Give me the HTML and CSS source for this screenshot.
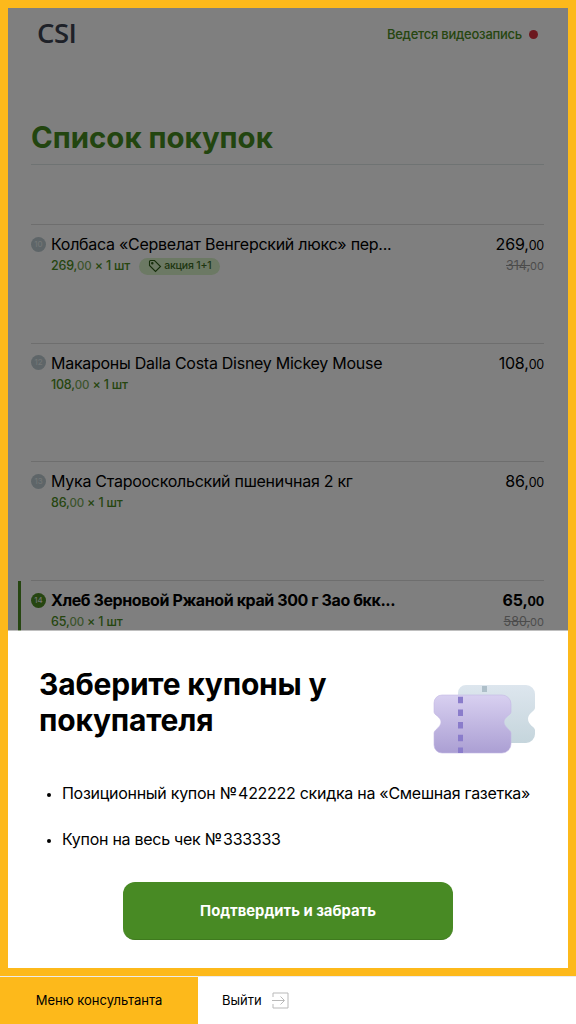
FILE: index.html
```html
<!DOCTYPE html>
<html lang="en">
<head>
  <meta charset="UTF-8">
  <title>Список покупок</title>
  <link rel="stylesheet" href="styles.css">
</head>
<body>
  <div class="frame">
    <div class="receipt">
      <div class="top-bar">
        <div class="logo">CSI</div>
        <div class="rec">Ведется видеозапись <span class="rec-dot"></span></div>
      </div>
      <h1 class="title">Список покупок</h1>
      <div class="items">
        <div class="item">
          <div class="item-main">
            <div class="item-name"><span class="num">10</span><span class="name">Колбаса «Сервелат Венгерский люкс» пер...</span></div>
            <div class="item-sub">
              <span>269,<small>00</small> × 1 шт</span>
              <span class="promo">
                <svg width="14" height="14" viewBox="0 0 14 14" fill="none" stroke="#2a5a14" stroke-width="1.100"><path d="M1.500 2.500v4l6 6 5-5-6-6h-4a1 1 0 0 0-1 1z"/><circle cx="4.300" cy="4.300" r=".7"/></svg>
                акция 1+1
              </span>
            </div>
          </div>
          <div class="item-price">
            <div class="price">269,<small>00</small></div>
            <div class="old-price"><s>314,</s><small>00</small></div>
          </div>
        </div>
        <div class="item">
          <div class="item-main">
            <div class="item-name"><span class="num">12</span><span class="name">Макароны Dalla Costa Disney Mickey Mouse</span></div>
            <div class="item-sub"><span>108,<small>00</small> × 1 шт</span></div>
          </div>
          <div class="item-price">
            <div class="price">108,<small>00</small></div>
          </div>
        </div>
        <div class="item">
          <div class="item-main">
            <div class="item-name"><span class="num">13</span><span class="name">Мука Старооскольский пшеничная 2 кг</span></div>
            <div class="item-sub"><span>86,<small>00</small> × 1 шт</span></div>
          </div>
          <div class="item-price">
            <div class="price">86,<small>00</small></div>
          </div>
        </div>
        <div class="item current">
          <div class="item-main">
            <div class="item-name"><span class="num">14</span><span class="name">Хлеб Зерновой Ржаной край 300 г Зао бкк...</span></div>
            <div class="item-sub"><span>65,<small>00</small> × 1 шт</span></div>
          </div>
          <div class="item-price">
            <div class="price">65,<small>00</small></div>
            <div class="old-price"><s>580,</s><small>00</small></div>
          </div>
        </div>
      </div>
      <div class="dim"></div>
    </div>
    <div class="sheet">
      <div class="sheet-head">
        <h2 class="sheet-title">Заберите купоны у покупателя</h2>
        <svg class="coupons" width="104" height="76" viewBox="0 0 104 76">
          <defs>
            <linearGradient id="back" x1="0" y1="0" x2="0" y2="1"><stop offset="0" stop-color="#dde6ee"/><stop offset="1" stop-color="#c5d5dc"/></linearGradient>
            <linearGradient id="front" x1="0" y1="0" x2="0" y2="1"><stop offset="0" stop-color="#d8d0f0"/><stop offset="1" stop-color="#ab9fd3"/></linearGradient>
          </defs>
          <path fill="url(#back)" d="M33 3h60a9 9 0 0 1 9 9v14c0 3-7 5-7 11s7 8 7 11v4a9 9 0 0 1-9 9H33a8 8 0 0 1-8-8V11a8 8 0 0 1 8-8z"/>
          <rect x="49" y="4" width="5" height="6" fill="#aebfc9"/>
          <path fill="url(#front)" stroke="#c4b9e4" stroke-width=".6" d="M9 13h60a9 9 0 0 1 9 9v8c0 3-7 5-7 10s7 8 7 11v11a9 9 0 0 1-9 9H9a8 8 0 0 1-8-8V51c0-3 7-6 7-11s-7-7-7-10V21a8 8 0 0 1 8-8z"/>
          <path stroke="#8a7ccb" stroke-width="5" stroke-dasharray="6.500 6.200" d="M27.500 14.700V71"/>
        </svg>
      </div>
      <ul class="coupon-list">
        <li>Позиционный купон №&#8202;422222 скидка на «Смешная газетка»</li>
        <li>Купон на весь чек №&#8202;333333</li>
      </ul>
      <button class="confirm">Подтвердить и забрать</button>
    </div>
  </div>
  <div class="footer">
    <div class="footer-menu">Меню консультанта</div>
    <div class="footer-exit">Выйти
      <svg width="17" height="17" viewBox="0 0 17 17" fill="none" stroke="#b9b9b9" stroke-width="1"><path d="M1 5V1h15v15H1v-4"/><path d="M0 8.500h12M8.500 4.500l4 4-4 4"/></svg>
    </div>
  </div>
</body>
</html>
```

FILE: styles.css
```css
* {
  box-sizing: border-box;
}

body {
  margin: 0;
  width: 576px;
  height: 1024px;
  overflow: hidden;
  font-family: Inter, "Liberation Sans", sans-serif;
  color: #000;
  background: #fff;
}

.frame {
  height: 976px;
  border: 8px solid #fdb91b;
  display: flex;
  flex-direction: column;
}

.receipt {
  position: relative;
  flex: none;
  height: 623px;
  overflow: hidden;
  background: #fff;
  padding: 0 24px 0 23px;
}

.dim {
  position: absolute;
  top: 0;
  left: 0;
  right: 0;
  bottom: 0;
  background: rgba(0, 0, 0, 0.5);
  border-bottom: 1px solid rgba(255, 255, 255, 0.5);
}

.top-bar {
  display: flex;
  justify-content: space-between;
  align-items: center;
  height: 52px;
  padding: 0 6px 0 6px;
}

.logo {
  font-family: "Open Sans", sans-serif;
  font-size: 27.500px;
  font-weight: 600;
  letter-spacing: -0.5px;
  line-height: 48px;
  height: 50px;
  color: #3c4250;
}

.rec {
  font-size: 13px;
  font-weight: 500;
  letter-spacing: -0.25px;
  color: #4c8c22;
  display: flex;
  align-items: center;
  gap: 7px;
}

.rec-dot {
  width: 9px;
  height: 9px;
  border-radius: 50%;
  background: #d9313f;
}

.title {
  margin: 52px 0 0;
  height: 53px;
  font-size: 29.400px;
  font-weight: 700;
  line-height: 52px;
  color: #458a1f;
  border-bottom: 1px solid #dfe6e6;
}

.items {
  margin-top: 59px;
}

.item {
  position: relative;
  display: flex;
  justify-content: space-between;
  height: 118.700px;
  padding-top: 8px;
  border-top: 1px solid #ddd;
}

.item-name {
  display: flex;
  align-items: center;
  gap: 5px;
  font-size: 16px;
  line-height: 22px;
  letter-spacing: -0.27px;
}

.num {
  width: 15px;
  height: 15px;
  border-radius: 50%;
  background: #bccbd0;
  color: #e8eeee;
  font-size: 8px;
  line-height: 15px;
  letter-spacing: 0;
  text-align: center;
}

.item-sub {
  margin: 2px 0 0 20px;
  font-size: 12.500px;
  font-weight: 500;
  line-height: 18px;
  letter-spacing: -0.2px;
  color: #4c8c22;
  display: flex;
  align-items: center;
  gap: 9px;
}

.item-sub small {
  font-size: 11.500px;
  opacity: 0.75;
}

.promo {
  display: flex;
  align-items: center;
  gap: 2px;
  height: 17px;
  padding: 0 9px;
  border-radius: 9px;
  background: #d8f2c8;
  font-size: 10.500px;
  color: #3b6b22;
}

.item-price {
  text-align: right;
}

.price {
  font-size: 16px;
  line-height: 22px;
  letter-spacing: -0.2px;
}

.price small {
  font-size: 12.500px;
}

.old-price {
  font-size: 12.500px;
  line-height: 18px;
  color: #999;
}

.old-price small {
  font-size: 11px;
}

.current .num {
  background: #4c8c22;
}

.current .name,
.current .price {
  font-weight: 700;
}

.current .name {
  letter-spacing: -0.4px;
}

.current::before {
  content: "";
  position: absolute;
  left: -13px;
  top: 0;
  width: 3px;
  height: 100%;
  background: #4c8c22;
}

.sheet {
  flex: 1;
  background: #fff;
  padding: 35px 31px 0;
}

.sheet-head {
  display: flex;
  justify-content: space-between;
}

.sheet-title {
  margin: 0;
  width: 320px;
  font-size: 30px;
  font-weight: 700;
  line-height: 36px;
  letter-spacing: -0.2px;
}

.coupons {
  margin: 16px 0 0 0;
  flex: none;
}

.coupon-list {
  margin: 24px 0 0;
  padding: 0 0 0 23px;
  font-size: 16px;
  line-height: 22px;
  letter-spacing: -0.28px;
  white-space: nowrap;
}

.coupon-list li {
  margin-bottom: 24px;
}

.coupon-list li::marker {
  font-size: 12px;
}

.confirm {
  display: block;
  width: 330px;
  height: 58px;
  margin: 32px auto 0;
  border: none;
  border-bottom: 1px solid #3f7a1e;
  border-radius: 12px;
  background: #488a24;
  color: #fff;
  font-family: inherit;
  font-size: 14.800px;
  font-weight: 700;
}

.footer {
  display: flex;
  height: 48px;
  border-top: 1px solid #ececec;
}

.footer-menu {
  width: 198px;
  background: #fdb91b;
  font-size: 13px;
  line-height: 46px;
  text-align: center;
}

.footer-exit {
  display: flex;
  align-items: center;
  gap: 10px;
  padding: 0 0 1px 24px;
  font-size: 13px;
}
```
